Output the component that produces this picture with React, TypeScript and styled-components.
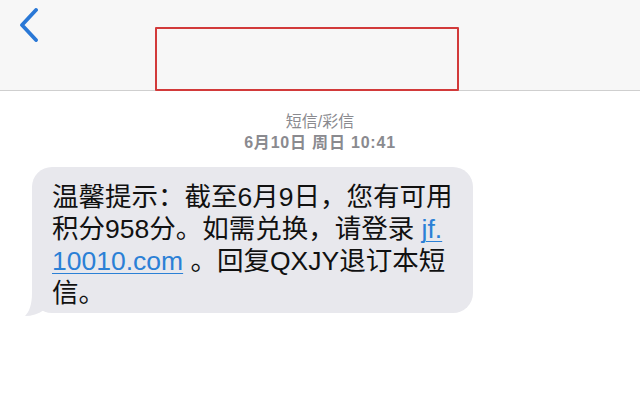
import React from 'react';
import styled, {createGlobalStyle} from "styled-components";

const GlobalStyle = createGlobalStyle`
  html, body {
    margin: 0;
    padding: 0;
    background: #ffffff;
  }

  body {
    font-family: "Liberation Sans", "Noto Sans CJK SC", sans-serif;
    color: #111111;
  }
`

const Screen = styled.div`
  width: 640px;
  height: 400px;
  overflow: hidden;
  background: #ffffff;
`

const Header = styled.header`
  position: relative;
  height: 90px;
  background: #f7f7f7;
  border-bottom: 1px solid #cfcfcf;
`

const BackButton = styled.button`
  display: flex;
  padding: 8px 0 0 19px;
  border: none;
  background: transparent;
  cursor: pointer;
`

const RedactBox = styled.div`
  position: absolute;
  left: 155px;
  top: 27px;
  width: 304px;
  height: 64px;
  box-sizing: border-box;
  border: 2px solid #d23a3a;
  border-radius: 1px;
`

const Meta = styled.div`
  display: flex;
  flex-direction: column;
  align-items: center;
  gap: 1px;
  padding-top: 21px;
  color: #8a8a8f;
  font-size: 16px;
`

const MetaLine = styled.span<{ $bold?: boolean }>`
  line-height: 20px;
  font-weight: ${({$bold}) => $bold ? 600 : 400};
  letter-spacing: ${({$bold}) => $bold ? '0.8px' : '0'};
`

const Thread = styled.div`
  display: flex;
  padding: 14px 0 0 32px;
`

const Bubble = styled.div`
  position: relative;
  width: 441px;
  box-sizing: border-box;
  padding: 14px 0 4px 20px;
  background: #e8e8ed;
  border-radius: 20px;
  font-size: 26.5px;
  line-height: 32px;
  color: #111111;
`

const Tail = styled.svg`
  position: absolute;
  left: -8px;
  bottom: -4px;
`

const Link = styled.a`
  color: #2b80d6;
  text-decoration: underline;
  text-decoration-thickness: 1px;
  text-underline-offset: 3px;
`

const Chevron = () => (
    <svg width="20" height="34" viewBox="0 0 20 34" fill="none">
        <polyline points="17,2 3,17 17,32" stroke="#2a78d6" strokeWidth="3.8"
                  strokeLinecap="round" strokeLinejoin="round"/>
    </svg>
)

const App = () => {
    return (
        <Screen>
            <GlobalStyle/>
            <Header>
                <BackButton aria-label="返回">
                    <Chevron/>
                </BackButton>
                <RedactBox/>
            </Header>
            <Meta>
                <MetaLine>短信/彩信</MetaLine>
                <MetaLine $bold>6月10日 周日 10:41</MetaLine>
            </Meta>
            <Thread>
                <Bubble>
                    温馨提示：截至6月9日，您有可用<br/>
                    积分958分。如需兑换，请登录 <Link href="#">jf.<br/>10010.com</Link> 。回复QXJY退订本短<br/>
                    信。
                    <Tail width="24" height="24" viewBox="0 0 24 24">
                        <path d="M8 0 C8 12 5 19 1 23 C8 23 14 21 20 17 L20 0 Z" fill="#e8e8ed"/>
                    </Tail>
                </Bubble>
            </Thread>
        </Screen>
    );
};

export default App;
